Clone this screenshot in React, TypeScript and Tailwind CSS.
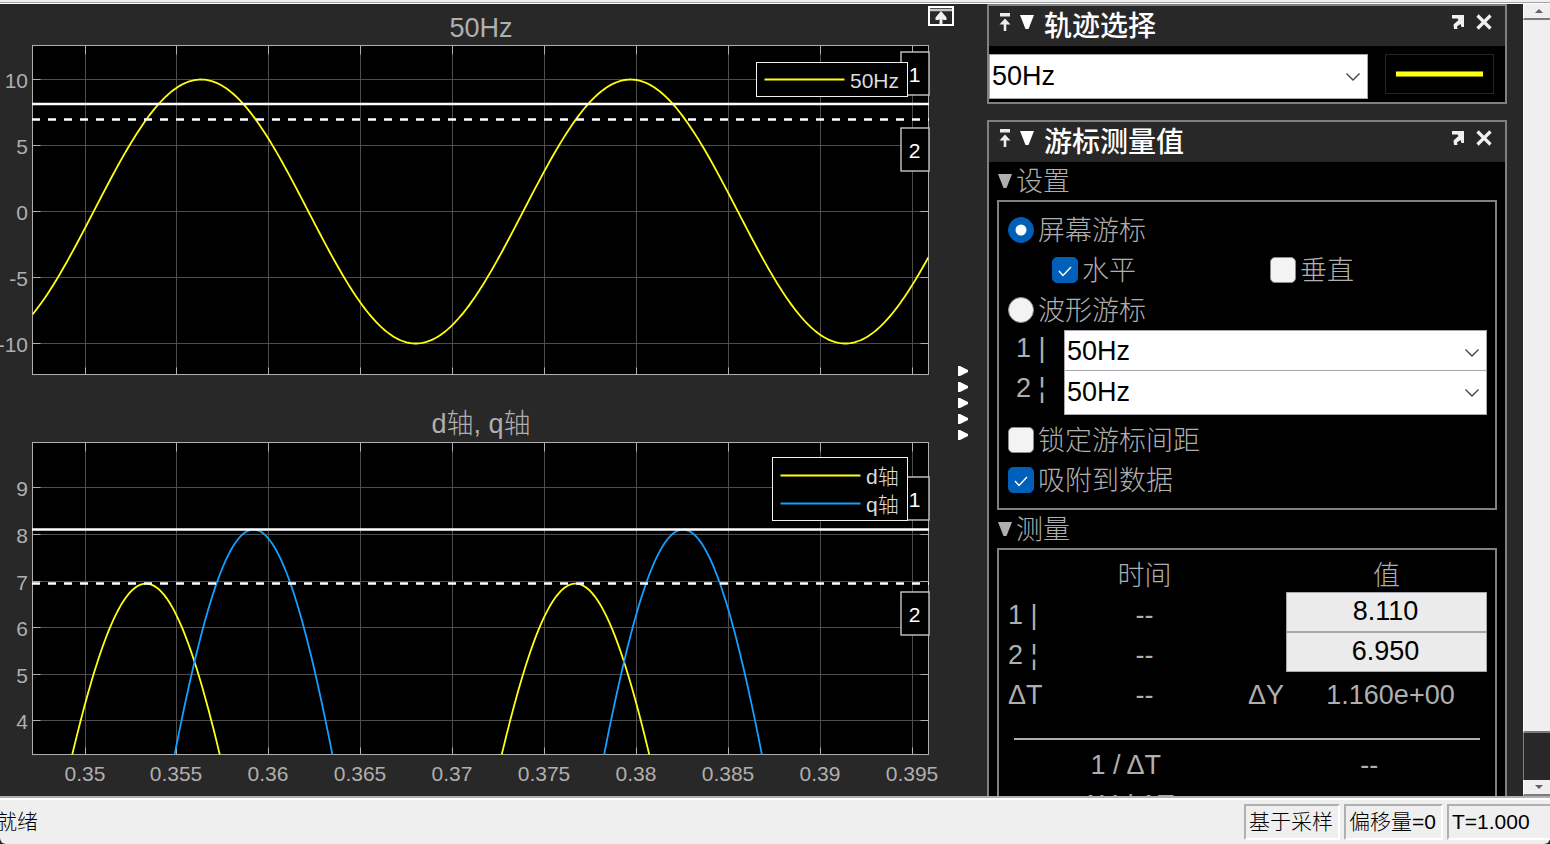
import { useId, type ReactNode } from "react";

const GRID_X = [85.5, 176.5, 268.5, 360.5, 452.5, 544.5, 636.5, 728.5, 820.5, 912.5];
const X_LABELS = ["0.35", "0.355", "0.36", "0.365", "0.37", "0.375", "0.38", "0.385", "0.39", "0.395"];
const LEFT = 32.5;
const RIGHT = 928.5;
const PERIOD = 429.5;

function cosinePath(peakX: number, amplitude: number, toY: (v: number) => number) {
  const points: string[] = [];
  for (let x = LEFT; x <= RIGHT; x += 2) {
    const v = amplitude * Math.cos((2 * Math.PI * (x - peakX)) / PERIOD);
    points.push(`${x} ${toY(v).toFixed(2)}`);
  }
  return "M" + points.join("L");
}

type Tick = { y: number; label: string };
type Series = { name: string; color: string; path: string };
type ChartProps = {
  title: string;
  originY: number;
  height: number;
  top: number;
  bottom: number;
  titleY: number;
  ticks: Tick[];
  series: Series[];
  solidY: number;
  dashedY: number;
  badges: { label: string; top: number; height: number }[];
  legend: { x: number; top: number; bottom: number; rows: number[] };
  showX?: boolean;
};

function Chart(p: ChartProps) {
  const clip = useId();
  return (
    <svg
      viewBox={`0 ${p.originY} 928 ${p.height}`}
      className="block h-auto w-full overflow-visible font-['Liberation_Sans','Noto_Sans_CJK_SC',sans-serif]"
      role="img"
      aria-label={p.title}
    >
      <clipPath id={clip}>
        <rect x={LEFT} y={p.top} width={RIGHT - LEFT} height={p.bottom - p.top} />
      </clipPath>
      <text x="481" y={p.titleY} textAnchor="middle" fill="#afafaf" className="text-[27px] font-light">
        {p.title}
      </text>
      <rect x={LEFT} y={p.top} width={RIGHT - LEFT} height={p.bottom - p.top} fill="#000" />
      <g stroke="#4d4d4d">
        {GRID_X.map((x) => (
          <line key={x} x1={x} x2={x} y1={p.top} y2={p.bottom} />
        ))}
        {p.ticks.map((t) => (
          <line key={t.y} x1={LEFT} x2={RIGHT} y1={t.y} y2={t.y} />
        ))}
      </g>
      <g stroke="#afafaf">
        {GRID_X.map((x) => (
          <path key={x} d={`M${x} ${p.top}v9M${x} ${p.bottom}v-7`} />
        ))}
        {p.ticks.map((t) => (
          <path key={t.y} d={`M${LEFT} ${t.y}h8M${RIGHT} ${t.y}h-8`} />
        ))}
        <rect x={LEFT} y={p.top} width={RIGHT - LEFT} height={p.bottom - p.top} fill="none" />
      </g>
      <g clipPath={`url(#${clip})`} fill="none" strokeWidth="1.8">
        {p.series.map((s) => (
          <path key={s.name} d={s.path} stroke={s.color} />
        ))}
      </g>
      <line x1="32" x2="929" y1={p.solidY} y2={p.solidY} stroke="#fff" strokeWidth="2.6" />
      <line x1="32" x2="929" y1={p.dashedY} y2={p.dashedY} stroke="#fff" strokeWidth="2.6" strokeDasharray="8 8" />
      <g fill="#afafaf" textAnchor="end" className="text-[21px]">
        {p.ticks.map((t) => (
          <text key={t.y} x="28" y={t.y + 8.5}>
            {t.label}
          </text>
        ))}
      </g>
      {p.showX && (
        <g fill="#afafaf" textAnchor="middle" className="text-[21px]">
          {GRID_X.map((x, i) => (
            <text key={x} x={x - 0.5} y={p.bottom + 26.5}>
              {X_LABELS[i]}
            </text>
          ))}
        </g>
      )}
      {p.badges.map((b) => (
        <g key={b.label}>
          <rect x="901" y={b.top} width="28" height={b.height} fill="#000" stroke="#c8c8c8" strokeWidth="1.4" />
          <text x="914.5" y={b.top + 30} textAnchor="middle" fill="#fff" className="text-[21px]">
            {b.label}
          </text>
        </g>
      ))}
      <rect
        x={p.legend.x}
        y={p.legend.top}
        width={907.5 - p.legend.x}
        height={p.legend.bottom - p.legend.top}
        fill="#000"
        stroke="#f0f0f0"
      />
      {p.series.map((s, i) => (
        <g key={s.name}>
          <line
            x1={p.legend.x + 8}
            x2={p.legend.x + 88}
            y1={p.legend.rows[i]}
            y2={p.legend.rows[i]}
            stroke={s.color}
            strokeWidth="2"
          />
          <text x={p.legend.x + 93.5} y={p.legend.rows[i] + 8.5} fill="#dcdcdc" className="text-[21px] font-light">
            {s.name}
          </text>
        </g>
      ))}
    </svg>
  );
}

const y1 = (v: number) => 211.5 - v * 13.2;
const y2 = (v: number) => 674.5 + (5 - v) * 46.6;

function DownTriangle() {
  return (
    <svg viewBox="0 0 14 14" className="h-[14px] w-[14px]" aria-hidden="true">
      <path d="M0 0h14L8.500 14h-3z" fill="currentColor" />
    </svg>
  );
}

function PanelHeader({ title }: { title: string }) {
  return (
    <header className="flex h-10 items-center bg-[#282828] pr-[13px] pl-[10px] text-white">
      <button aria-label="固定" className="mr-[9px] mb-2">
        <svg viewBox="0 0 12 18" className="h-[18px] w-3">
          <path d="M1 0h10v3.500H1zM6 5.500l5.500 6H7.300V18H4.700v-6.500H0.500z" fill="#ececec" />
        </svg>
      </button>
      <button aria-label="折叠" className="mr-[10px] mb-2">
        <DownTriangle />
      </button>
      <h2 className="flex-1 pt-px text-[28px] leading-[38px] font-medium">{title}</h2>
      <button aria-label="取消停靠" className="mr-3 mb-2">
        <svg viewBox="0 0 12 14" className="h-[14px] w-3">
          <path d="M0 0h12v12h-2.500L8.500 9 5 11.500 5.500 14H2L1.500 9.500 6.500 5 5.500 3.500H0z" fill="#f0f0f0" />
        </svg>
      </button>
      <button aria-label="关闭" className="mb-2">
        <svg viewBox="0 0 16 16" className="h-4 w-4">
          <path d="M1.500 1.500l13 13M14.500 1.500l-13 13" stroke="#f0f0f0" strokeWidth="3.2" />
        </svg>
      </button>
    </header>
  );
}

function SignalSelect({ label, id, className }: { label: string; id: string; className: string }) {
  return (
    <div className="relative min-w-0 flex-1">
      <select
        id={id}
        aria-label={label}
        className={`block w-full appearance-none rounded-none border-[#a6a6ac] bg-white pl-[2px] text-[27px] leading-[30px] text-black ${className}`}
      >
        <option>50Hz</option>
      </select>
      <svg
        viewBox="0 0 14 8"
        className="pointer-events-none absolute top-[19px] right-2 h-2 w-[14px]"
        fill="none"
        stroke="#404040"
        strokeWidth="1.3"
        aria-hidden="true"
      >
        <path d="M0.500 0.500L7 7l6.500-6.500" />
      </svg>
    </div>
  );
}

function Choice({
  type,
  label,
  checked,
  name,
  className = "",
}: {
  type: "radio" | "checkbox";
  label: string;
  checked?: boolean;
  name?: string;
  className?: string;
}) {
  const shape = type === "radio" ? "rounded-full" : "rounded-[5px]";
  return (
    <label className={`flex h-10 items-center gap-1 ${className}`}>
      <span className="relative block h-[26px] w-[26px]">
        <input
          type={type}
          name={name}
          defaultChecked={checked}
          className={`peer block h-[26px] w-[26px] appearance-none border border-[#8a8a8a] bg-[#f3f3f3] checked:border-[#005fb8] checked:bg-[#005fb8] ${shape}`}
        />
        <svg
          viewBox="0 0 26 26"
          className="pointer-events-none absolute inset-0 hidden h-full w-full peer-checked:block"
          aria-hidden="true"
        >
          {type === "radio" ? (
            <circle cx="13" cy="13" r="5.500" fill="#fff" />
          ) : (
            <path d="M7 14l4 4.500 8-8.500" fill="none" stroke="#fff" strokeWidth="1.4" />
          )}
        </svg>
      </span>
      <span className="pt-[2px]">{label}</span>
    </label>
  );
}

function Section({ title, children }: { title: string; children: ReactNode }) {
  return (
    <section className="px-2">
      <h3 className="h-[38px] font-light">
        <button className="flex items-center gap-1 pl-px">
          <DownTriangle />
          <span className="pt-[2px] leading-[36px]">{title}</span>
        </button>
      </h3>
      {children}
    </section>
  );
}

function ValueInput({ value, label }: { value: string; label: string }) {
  return (
    <input
      aria-label={label}
      defaultValue={value}
      className="block h-10 w-full border border-[#a6a6ac] bg-[#ebebeb] pr-[2px] pb-[2px] text-center text-[27px] leading-[30px] text-black"
    />
  );
}

export default function App() {
  return (
    <div className="flex h-screen flex-col overflow-hidden bg-[#282828] font-['Liberation_Sans','Noto_Sans_CJK_SC',sans-serif]">
      <div className="h-1 shrink-0 border-b border-white bg-[#efefef]">
        <div className="h-[3px] border-b border-[#a0a0a0]" />
      </div>

      <main className="flex min-h-0 flex-1 overflow-hidden">
        <section className="min-w-0 flex-1">
          <Chart
            title="50Hz"
            originY={4}
            height={396}
            top={45.5}
            bottom={374.5}
            titleY={37}
            ticks={[
              { y: 79.5, label: "10" },
              { y: 145.5, label: "5" },
              { y: 211.5, label: "0" },
              { y: 277.5, label: "-5" },
              { y: 343.5, label: "-10" },
            ]}
            series={[{ name: "50Hz", color: "#ffff11", path: cosinePath(201, 10, y1) }]}
            solidY={104}
            dashedY={119.5}
            badges={[
              { label: "1", top: 52, height: 43 },
              { label: "2", top: 128, height: 43 },
            ]}
            legend={{ x: 756.5, top: 62.5, bottom: 96.5, rows: [79.5] }}
          />
          <Chart
            title="d轴, q轴"
            originY={400}
            height={396}
            top={442.5}
            bottom={754.5}
            titleY={433}
            ticks={[
              { y: 487.5, label: "9" },
              { y: 534.5, label: "8" },
              { y: 581.5, label: "7" },
              { y: 627.5, label: "6" },
              { y: 674.5, label: "5" },
              { y: 720.5, label: "4" },
            ]}
            series={[
              { name: "d轴", color: "#ffff11", path: cosinePath(146, 6.95, y2) },
              { name: "q轴", color: "#139fff", path: cosinePath(253.5, 8.11, y2) },
            ]}
            solidY={529.5}
            dashedY={583.5}
            badges={[
              { label: "1", top: 477, height: 43 },
              { label: "2", top: 592, height: 43 },
            ]}
            legend={{ x: 772.5, top: 457.5, bottom: 520.5, rows: [475.5, 503.5] }}
            showX
          />
        </section>

        <div className="flex w-[59px] shrink-0 flex-col items-start pt-[2px] pb-4">
          <button aria-label="最大化坐标区">
            <svg viewBox="0 0 26 20" className="block h-5 w-[26px]">
              <rect x="1" y="1" width="24" height="18" fill="#282828" stroke="#fff" strokeWidth="2" />
              <path d="M2 4h22" stroke="#c4c4c4" strokeWidth="2.500" />
              <path d="M13 5l5.500 6.500v2.500h-3L14.500 13v5h-3v-5l-1 1h-3v-2.500z" fill="#f0f0f0" />
            </svg>
          </button>
          <button aria-label="折叠面板" className="my-auto pl-[30px]">
            <svg viewBox="0 0 10 74" className="h-[74px] w-[10px]">
              <path
                d="M0 0h2l8 4v2l-8 4H0zM0 16h2l8 4v2l-8 4H0zM0 32h2l8 4v2l-8 4H0zM0 48h2l8 4v2l-8 4H0zM0 64h2l8 4v2l-8 4H0z"
                fill="#fff"
              />
            </svg>
          </button>
        </div>

        <aside className="flex w-[520px] shrink-0 flex-col gap-4 text-[27px] leading-[38px] font-light text-[#afafaf]">
          <section className="border-2 border-[#808080] bg-black">
            <PanelHeader title="轨迹选择" />
            <div className="flex items-start gap-[17px] pt-2 pr-[11px] pb-[3px]">
              <SignalSelect id="trace" label="轨迹" className="h-[45px] border pb-[2px]" />
              <button aria-label="线条样式" className="flex h-10 w-[109px] items-center border border-[#262626] px-[10px]">
                <span className="h-[6px] w-full border-y border-[#8a8a00] bg-[#ffff11]" />
              </button>
            </div>
          </section>

          <section className="flex flex-col border-2 border-[#808080] bg-black">
            <PanelHeader title="游标测量值" />
            <Section title="设置">
              <div className="border-2 border-[#808080] px-2 py-2">
                <Choice type="radio" name="cursor" label="屏幕游标" checked className="pl-px" />
                <div className="grid grid-cols-[218px_1fr] pl-[45px]">
                  <Choice type="checkbox" label="水平" checked />
                  <Choice type="checkbox" label="垂直" />
                </div>
                <Choice type="radio" name="cursor" label="波形游标" className="pl-px" />
                <div className="flex pb-[5px]">
                  <div className="w-[57px] shrink-0 pl-[9px]">
                    <label htmlFor="cursor1" className="block h-10 leading-[36px]">
                      1 |
                    </label>
                    <label htmlFor="cursor2" className="block h-10 leading-[36px]">
                      2 ¦
                    </label>
                  </div>
                  <div className="min-w-0 flex-1">
                    <SignalSelect id="cursor1" label="游标 1" className="h-10 border border-b-0" />
                    <SignalSelect id="cursor2" label="游标 2" className="h-[45px] border pb-[2px]" />
                  </div>
                </div>
                <Choice type="checkbox" label="锁定游标间距" className="pl-px" />
                <Choice type="checkbox" label="吸附到数据" checked className="pl-px" />
              </div>
            </Section>

            <Section title="测量">
              <div className="border-2 border-b-0 border-[#808080] pt-[5px] pr-2 pl-[9px]">
                <table className="w-full table-fixed border-collapse">
                  <colgroup>
                    <col className="w-20" />
                    <col />
                    <col className="w-[87px]" />
                    <col className="w-[201px]" />
                  </colgroup>
                  <thead>
                    <tr className="h-[37px]">
                      <td className="p-0" />
                      <th className="p-0 pt-[5px] pl-[2px] leading-[32px] font-light">时间</th>
                      <td className="p-0" />
                      <th className="p-0 pt-[5px] leading-[32px] font-light">值</th>
                    </tr>
                  </thead>
                  <tbody>
                    <tr className="h-10">
                      <th className="p-0 pt-[6px] text-left leading-[34px] font-light">1 |</th>
                      <td className="p-0 pt-[6px] pl-[2px] text-center leading-[34px]">--</td>
                      <td className="p-0" />
                      <td className="p-0">
                        <ValueInput label="值 1" value="8.110" />
                      </td>
                    </tr>
                    <tr className="h-10">
                      <th className="p-0 pt-[6px] text-left leading-[34px] font-light">2 ¦</th>
                      <td className="p-0 pt-[6px] pl-[2px] text-center leading-[34px]">--</td>
                      <td className="p-0" />
                      <td className="p-0">
                        <ValueInput label="值 2" value="6.950" />
                      </td>
                    </tr>
                    <tr className="h-10">
                      <th className="p-0 pt-[6px] text-left leading-[34px] font-light">ΔT</th>
                      <td className="p-0 pt-[6px] pl-[2px] text-center leading-[34px]">--</td>
                      <th className="p-0 pt-[6px] pr-[2px] text-right leading-[34px] font-light">ΔY</th>
                      <td className="p-0 pt-[6px] pl-2 text-center leading-[34px]">1.160e+00</td>
                    </tr>
                  </tbody>
                </table>
                <hr className="mr-[7px] ml-[6px] mt-[26px] mb-[5px] border-t-2 border-[#afafaf]" />
                <table className="w-full table-fixed border-collapse">
                  <tbody>
                    <tr className="h-10">
                      <th className="p-0 pr-1 text-center leading-10 font-light">1 / ΔT</th>
                      <td className="p-0 pl-1 text-center leading-10">--</td>
                    </tr>
                    <tr className="h-10">
                      <th className="p-0 text-center leading-10 font-light">ΔY / ΔT</th>
                      <td className="p-0" />
                    </tr>
                  </tbody>
                </table>
              </div>
            </Section>
          </section>
        </aside>

        <div className="ml-4 flex w-[27px] shrink-0 flex-col">
          <button
            aria-label="向上滚动"
            className="flex h-4 shrink-0 items-center justify-center border-b-2 border-l border-b-[#7a7a7a] border-l-white bg-[#efefef] pl-1"
          >
            <svg viewBox="0 0 8 4" className="h-1 w-2">
              <path d="M0 4l4-4 4 4z" fill="#606060" />
            </svg>
          </button>
          <div className="min-h-0 flex-1 border-b-2 border-l border-b-[#7a7a7a] border-l-white bg-[#efefef]" />
          <div className="h-[47px] shrink-0 border-l border-[#808080] bg-[#282828]" />
          <button
            aria-label="向下滚动"
            className="flex h-4 shrink-0 items-center justify-center border-b-2 border-l border-b-[#7a7a7a] border-l-white bg-[#efefef] pl-1"
          >
            <svg viewBox="0 0 8 4" className="h-1 w-2">
              <path d="M0 0l4 4 4-4z" fill="#606060" />
            </svg>
          </button>
        </div>
      </main>

      <footer className="flex h-12 shrink-0 rounded-b-md border-t-2 border-[#b0b0b0] bg-[#efefef] text-[21px] leading-[32px] text-black">
        <div className="flex flex-1 items-start gap-1 border-t-2 border-white pt-1">
          <span className="-ml-1 flex-1 pt-[2px] font-light">就绪</span>
          <span className="h-9 w-24 border-2 border-[#b0b0b0] border-r-white border-b-white pl-[3px] font-light">
            基于采样
          </span>
          <span className="h-9 w-[99px] border-2 border-[#b0b0b0] border-r-white border-b-white pl-[3px] font-light whitespace-nowrap">
            偏移量=0
          </span>
          <span className="h-9 w-[103px] border-2 border-r-0 border-[#b0b0b0] border-b-white pl-[3px]">T=1.000</span>
        </div>
      </footer>
    </div>
  );
}
